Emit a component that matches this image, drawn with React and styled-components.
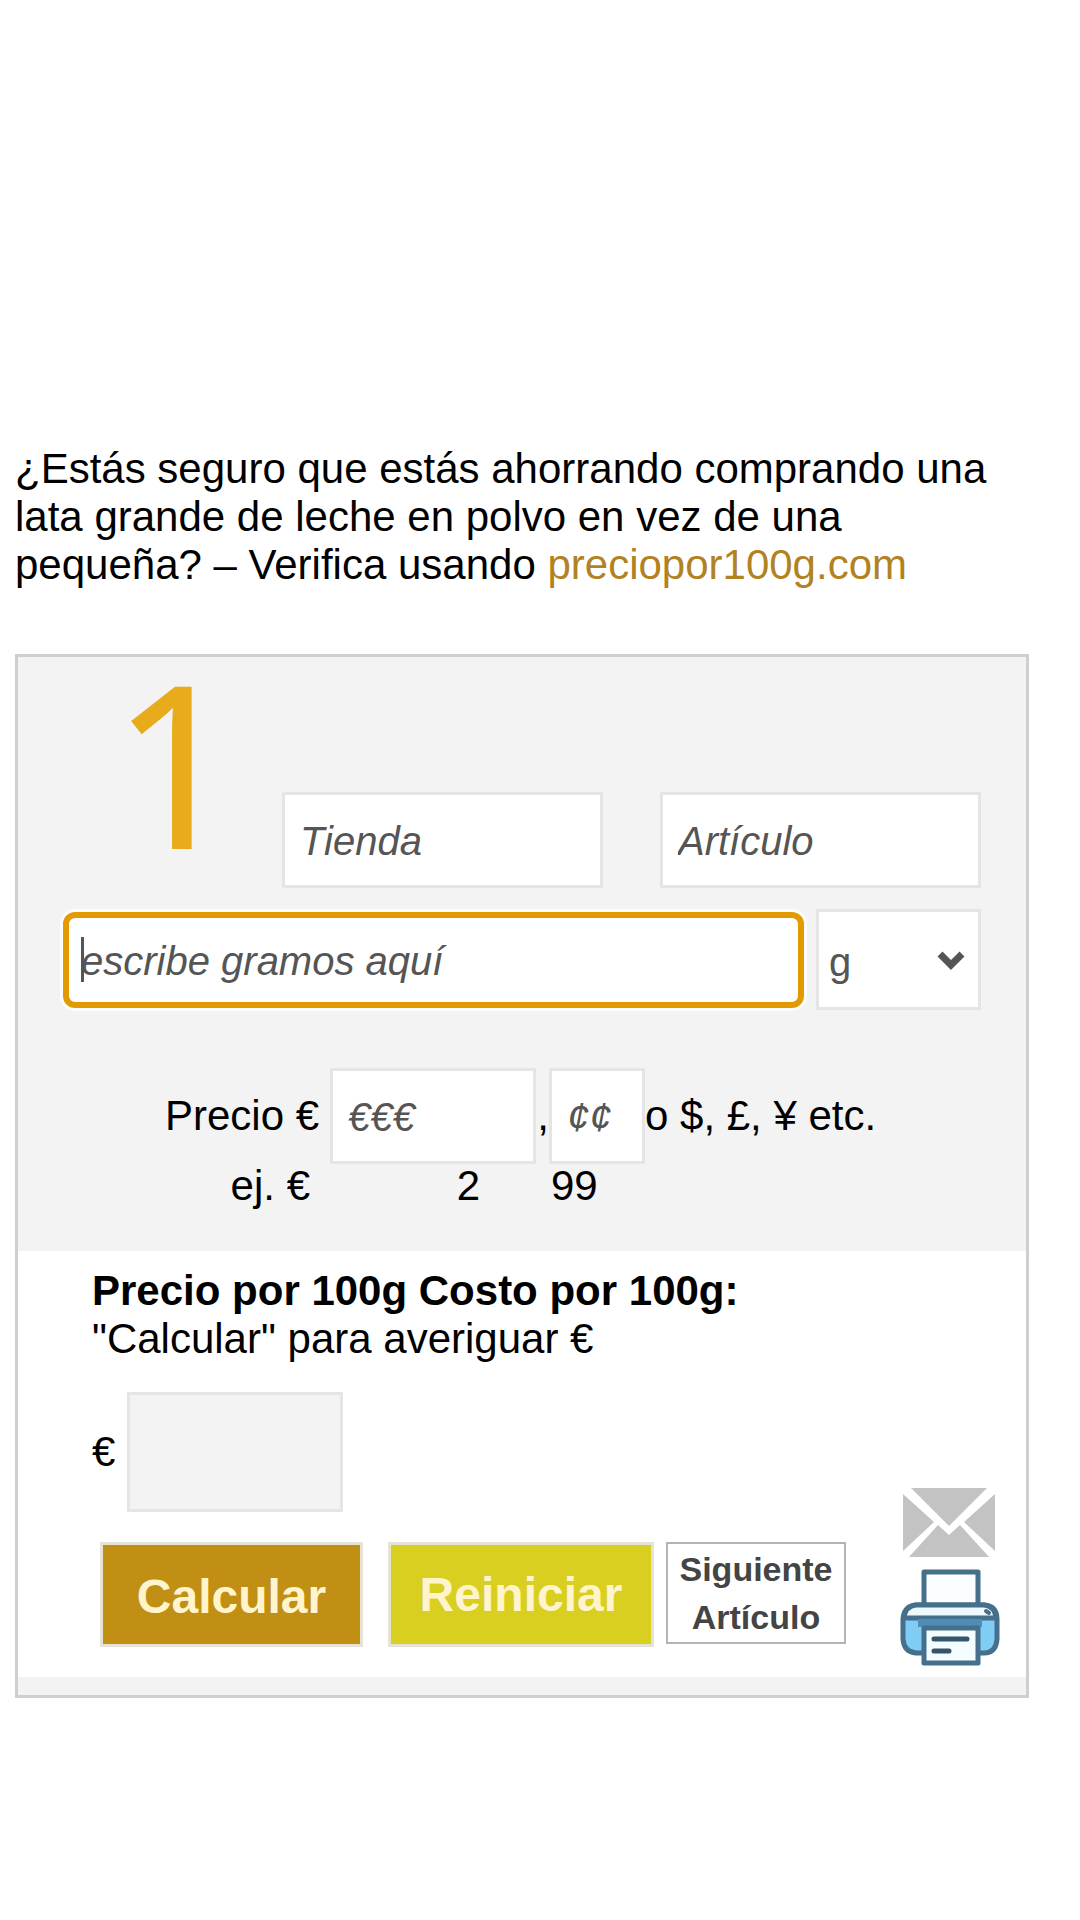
import React from "react";
import styled, { createGlobalStyle } from "styled-components";

const GlobalStyle = createGlobalStyle`
  *, *::before, *::after { box-sizing: border-box; }
  body {
    margin: 0;
    background: #fff;
    color: #000;
    font-family: Arial, "Liberation Sans", sans-serif;
    font-size: 42px;
    line-height: 48px;
  }
`;

const Page = styled.main`
  padding: 445px 51px 60px 15px;
`;

const Intro = styled.p`
  margin: 0 0 65px;
`;

const SiteLink = styled.a`
  color: #b28222;
  text-decoration: none;
`;

const Panel = styled.form`
  border: 3px solid #cfcfcf;
  background: #f3f3f3;
  padding-bottom: 18px;
`;

const Entry = styled.section`
  padding: 23px 45px 43px;
`;

const NameRow = styled.div`
  display: flex;
  align-items: flex-end;
`;

const StepNumber = styled.div`
  flex: 0 0 219px;
  padding: 0 0 46px 48px;
  color: #e8ab1b;
  font-family: "Noto Sans", "Open Sans", sans-serif;
  font-size: 227px;
  line-height: 162px;
`;

const NameFields = styled.div`
  flex: 1;
  display: flex;
  gap: 57px;
`;

const Field = styled.input`
  flex: 1;
  min-width: 0;
  width: 100%;
  height: ${(p) => p.$height || 96}px;
  margin: 0;
  padding: 2px 15px 0;
  border: 3px solid #e5e5e5;
  border-radius: 0;
  outline: none;
  background: ${(p) => p.$fill || "#fff"};
  color: #555;
  font: inherit;
  font-size: 40px;

  &::placeholder {
    color: #555;
    font-style: italic;
    opacity: 1;
  }
`;

const GramsField = styled(Field)`
  padding: 4px 12px 0;
  border: 6px solid #e29a00;
  border-radius: 12px;
  box-shadow: 0 0 0 3px #fcfcfc;
  background: linear-gradient(#555, #555) 12px center / 3px 45px no-repeat #fff;
  caret-color: transparent;
`;

const WeightRow = styled.div`
  display: flex;
  align-items: center;
  gap: 12px;
  margin: 21px 0 58px;
`;

const UnitBox = styled.div`
  position: relative;
  flex: 0 0 165px;

  svg {
    position: absolute;
    right: 16px;
    top: 42px;
    pointer-events: none;
  }
`;

const UnitSelect = styled.select`
  appearance: none;
  display: block;
  width: 100%;
  height: 101px;
  padding: 4px 10px 0;
  border: 3px solid #e5e5e5;
  border-radius: 0;
  background: #fff;
  color: #555;
  font: inherit;
  font-size: 40px;
`;

const PriceGrid = styled.div`
  display: grid;
  grid-template-columns: 165px 206px 13px 96px 1fr;
  align-items: center;
  padding-left: 102px;
`;

const Comma = styled.span`
  text-align: right;
`;

const Example = styled.span`
  line-height: 44px;
  text-align: ${(p) => p.$align || "left"};
  padding-left: ${(p) => p.$start || 0}px;
  padding-right: ${(p) => p.$end || 0}px;
`;

const Result = styled.section`
  background: #fff;
  padding: 16px 26px 10px 74px;
`;

const Heading = styled.h2`
  margin: 0;
  font-size: inherit;
`;

const Note = styled.p`
  margin: 0;
`;

const ResultBody = styled.div`
  display: flex;
  justify-content: space-between;
  align-items: flex-end;
  margin-top: 29px;
`;

const Answer = styled.div`
  display: flex;
  align-items: center;
  gap: 12px;
  margin-bottom: 30px;
`;

const AnswerField = styled(Field)`
  flex: 0 0 216px;
`;

const Buttons = styled.div`
  display: flex;
  align-items: flex-start;
  padding: 0 0 20px 8px;
`;

const ActionButton = styled.button`
  width: ${(p) => p.$width}px;
  height: 105px;
  margin: 0 ${(p) => p.$gap}px 0 0;
  padding: ${(p) => p.$drop || 0}px 0 0;
  border: 3px solid #e6e3d6;
  background: ${(p) => p.$fill};
  color: #fff4cc;
  font: inherit;
  font-size: 48px;
  font-weight: bold;
`;

const NextButton = styled.button`
  width: 180px;
  height: 102px;
  margin: 0;
  padding: 0;
  border: 2px solid #b4b4b4;
  background: #fff;
  color: #444;
  font: inherit;
  font-size: 34px;
  line-height: 48px;
  font-weight: bold;
`;

const Tools = styled.div`
  display: flex;
  flex-direction: column;
  align-items: center;
  gap: 12px;
`;

const ToolLink = styled.a`
  display: block;

  svg { display: block; }
`;

function Envelope() {
  return (
    <svg width="94" height="69" viewBox="0 0 94 69" aria-hidden="true">
      <g fill="#c3c3c3">
        <path d="M8 0H84L46 38Z" />
        <path d="M0 6L31 34L0 63Z" />
        <path d="M92 6L61 34L92 63Z" />
        <path d="M35 37L46 47L57 37L86 69H6Z" />
      </g>
    </svg>
  );
}

function Printer() {
  return (
    <svg width="100" height="98" viewBox="0 0 100 98" aria-hidden="true">
      <g stroke="#456f8b" strokeWidth="5" strokeLinejoin="round">
        <path d="M24 37V3H78V37" fill="#fbfeff" />
        <path d="M16 36H84Q97 37 97 50V70Q96 84 84 84H16Q4 83 3 70V50Q4 37 16 36Z" fill="#7fcdf5" />
        <path d="M16 36H84Q95 37 96 49H4Q5 37 16 36Z" fill="#eef9fe" />
        <path d="M18 54H82" stroke="#4d8db6" strokeWidth="8" />
        <path d="M24 59H78V94H24Z" fill="#f3fcff" />
      </g>
      <path d="M86 42L89 44" stroke="#456f8b" strokeWidth="4" strokeLinecap="round" />
      <path d="M34 70H67M34 82H49" stroke="#34556a" strokeWidth="5" strokeLinecap="round" />
    </svg>
  );
}

export default function App() {
  return (
    <>
      <GlobalStyle />
      <Page>
        <Intro>
          ¿Estás seguro que estás ahorrando comprando una lata grande de leche en
          polvo en vez de una pequeña? – Verifica usando{" "}
          <SiteLink href="#inicio">preciopor100g.com</SiteLink>
        </Intro>

        <Panel onSubmit={(e) => e.preventDefault()}>
          <Entry>
            <NameRow>
              <StepNumber>1</StepNumber>
              <NameFields>
                <Field aria-label="Tienda" placeholder="Tienda" />
                <Field aria-label="Artículo" placeholder="Artículo" />
              </NameFields>
            </NameRow>

            <WeightRow>
              <GramsField
                aria-label="Gramos"
                inputMode="decimal"
                placeholder="escribe gramos aquí"
              />
              <UnitBox>
                <UnitSelect aria-label="Unidad" defaultValue="g">
                  <option value="g">g</option>
                  <option value="kg">kg</option>
                </UnitSelect>
                <svg width="28" height="20" viewBox="0 0 28 20" aria-hidden="true">
                  <path d="M3 3L14 14L25 3" fill="none" stroke="#555" strokeWidth="7" />
                </svg>
              </UnitBox>
            </WeightRow>

            <PriceGrid>
              <label htmlFor="euros">Precio €</label>
              <Field id="euros" inputMode="numeric" placeholder="€€€" />
              <Comma>,</Comma>
              <Field aria-label="Céntimos" inputMode="numeric" placeholder="¢¢" />
              <span>o $, £, ¥ etc.</span>
              <Example $align="right" $end={20}>ej. €</Example>
              <Example $align="right" $end={56}>2</Example>
              <span />
              <Example $start={2}>99</Example>
            </PriceGrid>
          </Entry>

          <Result>
            <Heading>Precio por 100g Costo por 100g:</Heading>
            <Note>"Calcular" para averiguar €</Note>
            <ResultBody>
              <div>
                <Answer>
                  <label htmlFor="resultado">€</label>
                  <AnswerField id="resultado" $height={120} $fill="#f3f3f3" readOnly />
                </Answer>
                <Buttons>
                  <ActionButton type="submit" $width={263} $gap={25} $drop={4} $fill="#c08f14">
                    Calcular
                  </ActionButton>
                  <ActionButton type="reset" $width={266} $gap={12} $fill="#d9cf20">
                    Reiniciar
                  </ActionButton>
                  <NextButton type="button">
                    Siguiente
                    <br />
                    Artículo
                  </NextButton>
                </Buttons>
              </div>
              <Tools>
                <ToolLink href="#correo" aria-label="Enviar por correo">
                  <Envelope />
                </ToolLink>
                <ToolLink href="#imprimir" aria-label="Imprimir">
                  <Printer />
                </ToolLink>
              </Tools>
            </ResultBody>
          </Result>
        </Panel>
      </Page>
    </>
  );
}
